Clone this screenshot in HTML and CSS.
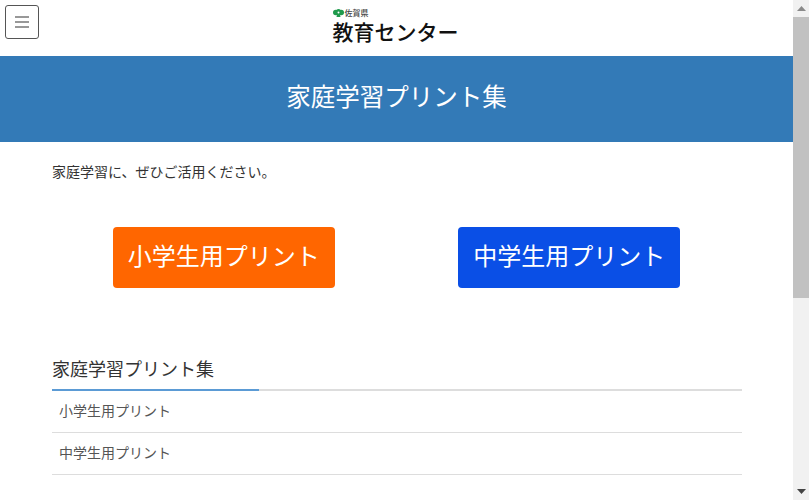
FILE: index.html
```html
<!DOCTYPE html>
<html lang="ja">
<head>
<meta charset="utf-8">
<title>家庭学習プリント集</title>
<link rel="stylesheet" href="styles.css">
</head>
<body>
<div class="app">
  <div class="page">
    <header class="site-header">
      <button class="menu-btn" aria-label="メニュー">
        <svg width="14" height="12" viewBox="0 0 14 12"><path d="M0 1h14M0 6h14M0 11h14" fill="none" stroke="#333" stroke-width="1.200"/></svg>
      </button>
      <a class="logo">
        <span class="logo-top">
          <svg width="11" height="8" viewBox="0 0 11 8"><circle cx="2.800" cy="3.500" r="2.800" fill="#1f9a4c"/><circle cx="8.200" cy="3.500" r="2.800" fill="#1f9a4c"/><circle cx="5.500" cy="2.500" r="2.500" fill="#1f9a4c"/><path d="M4 5h3l.5 3h-4z" fill="#1f9a4c"/><circle cx="5.500" cy="3.500" r="1" fill="#fff"/></svg>
          <span class="logo-pref">佐賀県</span>
        </span>
        <span class="logo-name">教育センター</span>
      </a>
    </header>
    <section class="banner"><h1>家庭学習プリント集</h1></section>
    <main class="content">
      <p class="intro">家庭学習に、ぜひご活用ください。</p>
      <div class="choices">
        <a class="choice choice-elementary">小学生用プリント</a>
        <a class="choice choice-junior">中学生用プリント</a>
      </div>
      <h2 class="section-title"><span>家庭学習プリント集</span></h2>
      <ul class="link-list">
        <li>小学生用プリント</li>
        <li>中学生用プリント</li>
      </ul>
    </main>
  </div>
  <div class="scrollbar" aria-hidden="true">
    <div class="arrow"><svg width="9" height="5" viewBox="0 0 9 5"><path d="M4.500 0l4.500 5H0z" fill="#8a8a8a"/></svg></div>
    <div class="thumb"></div>
    <div class="track"></div>
    <div class="arrow"><svg width="9" height="5" viewBox="0 0 9 5"><path d="M4.500 5L0 0h9z" fill="#444"/></svg></div>
  </div>
</div>
</body>
</html>
```
FILE: styles.css
```css
* { box-sizing: border-box; }
html, body { margin: 0; height: 500px; overflow: hidden; background: #fff; }
body { font-family: "Noto Sans CJK JP", "Noto Sans", sans-serif; color: #333; }
.app { display: flex; height: 500px; padding-right: 1px; }
.page { flex: 1; min-width: 0; }
.site-header { height: 56px; display: flex; justify-content: center; position: relative; }
.menu-btn { position: absolute; left: 5px; top: 5px; width: 34px; height: 34px; padding: 0; display: flex; align-items: center; justify-content: center; background: #fff; border: 1px solid #555; border-radius: 3px; }
.logo { display: flex; flex-direction: column; margin-right: 2px; padding-top: 8px; color: #111; }
.logo-top { display: flex; align-items: center; gap: 1px; height: 10px; }
.logo-pref { font-size: 8px; line-height: 10px; font-weight: 500; color: #444; }
.logo-name { font-size: 21px; line-height: 24px; font-weight: 500; white-space: nowrap; margin-top: 1px; }
.banner { height: 86px; padding-bottom: 6px; background: #337ab7; display: flex; align-items: center; justify-content: center; }
.banner h1 { margin: 0; font-size: 24.500px; font-weight: 400; color: #fff; line-height: 34px; }
.content { padding: 0 51px 0 52px; }
.intro { margin: 0; padding-top: 19px; font-size: 14px; line-height: 20px; }
.choices { display: grid; grid-template-columns: 1fr 1fr; justify-items: center; margin: 46px 0 0 -1px; }
.choice { width: 222px; height: 61px; padding-bottom: 6px; display: flex; align-items: center; justify-content: center; border-radius: 4px; color: #fff; font-size: 24px; }
.choice-elementary { background: #ff6600; }
.choice-junior { background: #0a4fe6; }
.section-title { margin: 68px 0 0; font-size: 18px; font-weight: 400; line-height: 24px; border-bottom: 2px solid #ddd; padding: 0; height: 35px; }
.section-title span { display: block; width: 207px; height: 35px; border-bottom: 2px solid #5b9bd5; }
.link-list { list-style: none; margin: 0; padding: 0; }
.link-list li { height: 42px; padding: 0 7px 4px; display: flex; align-items: center; font-size: 14px; border-bottom: 1px solid #ddd; color: #555; }
.scrollbar { width: 16px; height: 500px; background: #f1f1f1; display: flex; flex-direction: column; }
.arrow { height: 17px; display: flex; align-items: center; justify-content: center; flex: none; }
.thumb { height: 281px; background: #c1c1c1; flex: none; }
.track { flex: 1; }
```
